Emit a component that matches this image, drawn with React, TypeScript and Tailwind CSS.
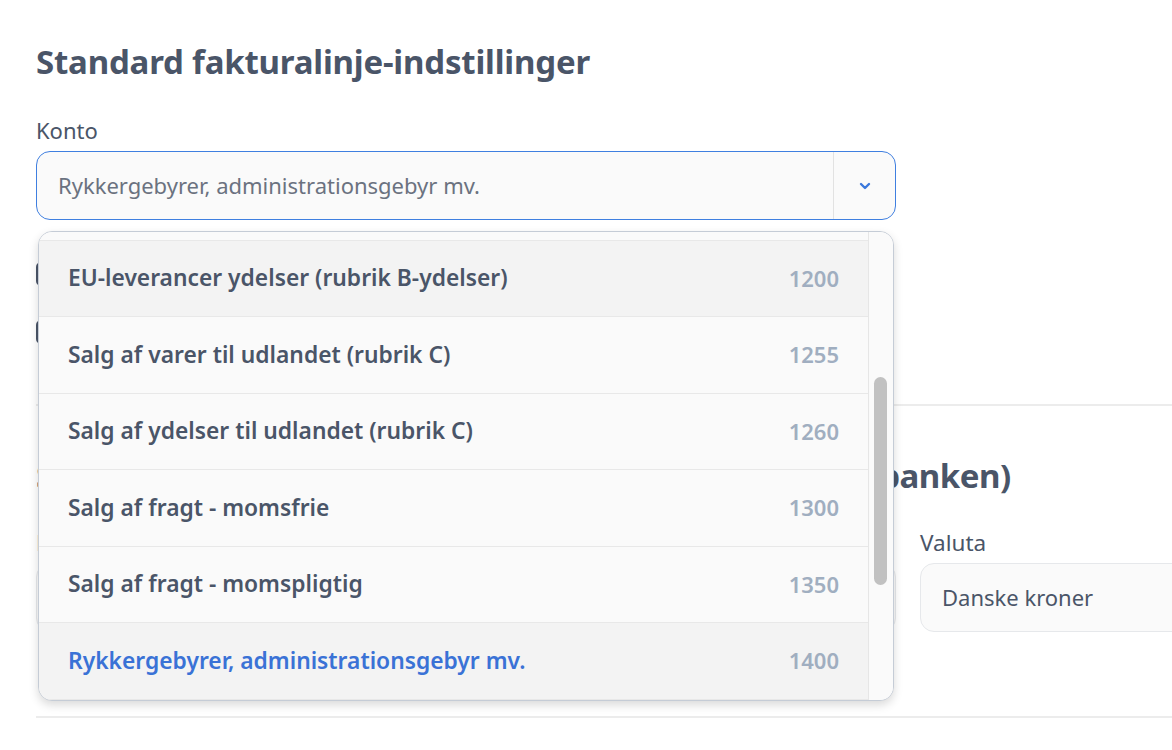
import React from "react";

const items = [
  { name: "EU-leverancer varer (rubrik B-varer)", code: "1150", state: "normal" },
  { name: "EU-leverancer ydelser (rubrik B-ydelser)", code: "1200", state: "hover" },
  { name: "Salg af varer til udlandet (rubrik C)", code: "1255", state: "normal" },
  { name: "Salg af ydelser til udlandet (rubrik C)", code: "1260", state: "normal" },
  { name: "Salg af fragt - momsfrie", code: "1300", state: "normal" },
  { name: "Salg af fragt - momspligtig", code: "1350", state: "normal" },
  { name: "Rykkergebyrer, administrationsgebyr mv.", code: "1400", state: "selected" },
];

function Chevron() {
  return (
    <svg width="12" height="8" viewBox="0 0 12 8" fill="none">
      <path d="M2 2l4 4 4-4" stroke="#3b78dc" strokeWidth="2.4" strokeLinecap="round" strokeLinejoin="round" />
    </svg>
  );
}

export default function App() {
  return (
    <div
      className="h-[750px] w-[1172px] overflow-hidden bg-white"
      style={{ fontFamily: '"Noto Sans", "Open Sans", sans-serif' }}
    >
      <div className="w-[1400px] pl-[36px] pt-[41px]">
        <h1
          className="text-[33px] font-bold leading-[42px] text-[#4a5568]"
          style={{ letterSpacing: "-0.2px" }}
        >
          Standard fakturalinje-indstillinger
        </h1>

        <div className="mt-[34px] w-[860px]">
          <label className="block text-[22px] leading-[26px] text-[#4a5568]">Konto</label>
          <div className="relative mt-[8px]">
            <div className="flex h-[69px] items-center rounded-[14px] border-[1.5px] border-[#3f7fe0] bg-[#fafafa]">
              <div className="flex-1 pl-[21px] text-[22px] text-[#6b7280]">
                Rykkergebyrer, administrationsgebyr mv.
              </div>
              <div className="h-full w-px bg-[#e2e2e2]" />
              <div className="flex w-[61px] items-center justify-center">
                <Chevron />
              </div>
            </div>

            {/* dropdown */}
            <div className="absolute left-[2px] top-[80px] z-10 flex h-[470px] w-[856px] overflow-hidden rounded-[14px] border border-[#c5ccd6] bg-[#fafafa] shadow-[0_4px_10px_rgba(0,0,0,0.15)]">
              <div className="flex-1 overflow-hidden">
                <div className="-mt-[68px]">
                  {items.map((it) => (
                    <div
                      key={it.code}
                      className={
                        "flex h-[76.5px] items-center justify-between border-b border-[#e8e8e8] pl-[29px] pr-[29px] " +
                        (it.state === "normal" ? "bg-[#fafafa]" : "bg-[#f3f3f3]")
                      }
                    >
                      <span
                        className={
                          "text-[22.8px] font-semibold " +
                          (it.state === "selected" ? "text-[#3a72d6]" : "text-[#4a5568]")
                        }
                      >
                        {it.name}
                      </span>
                      <span className="text-[22px] font-semibold text-[#a0aec0]">{it.code}</span>
                    </div>
                  ))}
                </div>
              </div>
              <div className="relative w-[25px] border-l border-[#e6e6e6] bg-[#fafafa]">
                <div className="absolute left-[5px] top-[145px] h-[208px] w-[13px] rounded-full bg-[#c1c1c1]" />
              </div>
            </div>
          </div>
        </div>

        <div className="mt-[42px] flex flex-col gap-[34px]">
          <div className="flex h-[24px] items-center gap-3">
            <div className="h-[24px] w-[24px] rounded-[5px] border-2 border-[#4a5568]" />
            <span className="text-[21px] leading-[24px] text-[#4a5568]">Vis enhedspris inkl. moms</span>
          </div>
          <div className="flex h-[24px] items-center gap-3">
            <div className="h-[24px] w-[24px] rounded-[5px] border-2 border-[#4a5568]" />
            <span className="text-[21px] leading-[24px] text-[#4a5568]">Brug varenummer som standard</span>
          </div>
        </div>

        <div className="mt-[60px] h-[2px] w-[1300px] bg-[#ececec]" />

        <h2
          className="mt-[49px] text-[33px] font-bold leading-[42px] text-[#4a5568]"
          style={{ letterSpacing: "-0.5px" }}
        >
          Standard betalingsoplysninger på faktura (betaling i banken)
        </h2>

        <div className="mt-[33px] grid w-[1302px] grid-cols-3 gap-x-[24px]">
          {[
            ["Reg.nr.", ""],
            ["Kontonummer", ""],
            ["Valuta", "Danske kroner"],
          ].map(([l, v]) => (
            <div key={l}>
              <label className="block text-[22.5px] leading-[26px] text-[#4a5568]">{l}</label>
              <div className="mt-[7px] flex h-[69px] items-center rounded-[14px] border border-[#e6e8eb] bg-[#fafafa] pl-[21px] text-[22px] text-[#4a5568]">
                {v}
              </div>
            </div>
          ))}
        </div>

        <div className="mt-[84px] h-[2px] w-[1300px] bg-[#ececec]" />
      </div>
    </div>
  );
}
